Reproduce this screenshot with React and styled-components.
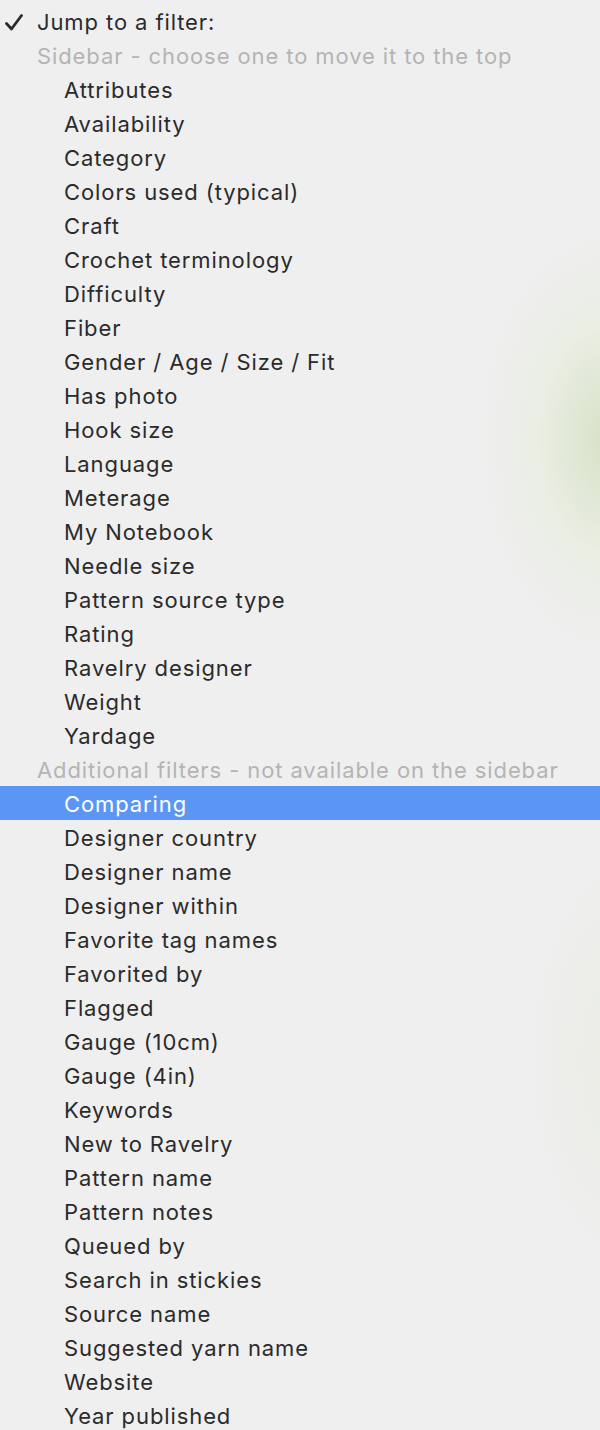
import React from 'react';
import styled, { createGlobalStyle } from 'styled-components';

const GlobalStyle = createGlobalStyle`
  html, body {
    margin: 0;
    padding: 0;
    background: #efefef;
  }
  body {
    font-family: Inter, "Liberation Sans", Arial, sans-serif;
  }
`;

const Menu = styled.div`
  width: 600px;
  height: 1430px;
  box-sizing: border-box;
  padding-top: 4px;
  overflow: hidden;
  display: flex;
  flex-direction: column;
  background:
    radial-gradient(ellipse 130px 210px at 610px 440px, rgba(205, 220, 185, 0.75), rgba(225, 236, 205, 0.35) 55%, rgba(239, 239, 239, 0) 100%),
    radial-gradient(ellipse 90px 200px at 620px 1060px, rgba(228, 234, 214, 0.5), rgba(239, 239, 239, 0) 100%),
    #efefef;
`;

const Row = styled.div`
  height: 34px;
  flex: none;
  display: flex;
  align-items: center;
  box-sizing: border-box;
  padding-left: ${(p) => (p.$indent ? 64 : 37)}px;
  padding-top: 2px;
  font-size: 22px;
  letter-spacing: 0.9px;
  white-space: nowrap;
  position: relative;
  color: ${(p) => (p.$header ? '#b4b4b4' : p.$selected ? '#ffffff' : '#2b2b2b')};
  background: ${(p) => (p.$selected ? '#5b96f5' : 'transparent')};
`;

const Check = styled.svg`
  position: absolute;
  left: 5px;
  top: 10px;
  width: 18px;
  height: 17px;
`;

const sidebar = [
  'Attributes', 'Availability', 'Category', 'Colors used (typical)', 'Craft',
  'Crochet terminology', 'Difficulty', 'Fiber', 'Gender / Age / Size / Fit',
  'Has photo', 'Hook size', 'Language', 'Meterage', 'My Notebook', 'Needle size',
  'Pattern source type', 'Rating', 'Ravelry designer', 'Weight', 'Yardage',
];

const additional = [
  'Comparing', 'Designer country', 'Designer name', 'Designer within',
  'Favorite tag names', 'Favorited by', 'Flagged', 'Gauge (10cm)', 'Gauge (4in)',
  'Keywords', 'New to Ravelry', 'Pattern name', 'Pattern notes', 'Queued by',
  'Search in stickies', 'Source name', 'Suggested yarn name', 'Website',
  'Year published',
];

const App = () => {
  return (
    <>
      <GlobalStyle />
      <Menu>
        <Row>
          <Check viewBox="0 0 18 17">
            <path d="M1.5 9.5 L6.5 15 L16.5 1.5" fill="none" stroke="#2b2b2b" strokeWidth="2.8" strokeLinecap="round" strokeLinejoin="round" />
          </Check>
          Jump to a filter:
        </Row>
        <Row $header>Sidebar - choose one to move it to the top</Row>
        {sidebar.map((name) => (
          <Row $indent key={name}>{name}</Row>
        ))}
        <Row $header>Additional filters - not available on the sidebar</Row>
        {additional.map((name, i) => (
          <Row $indent $selected={i === 0} key={name}>{name}</Row>
        ))}
      </Menu>
    </>
  );
};

export default App;
